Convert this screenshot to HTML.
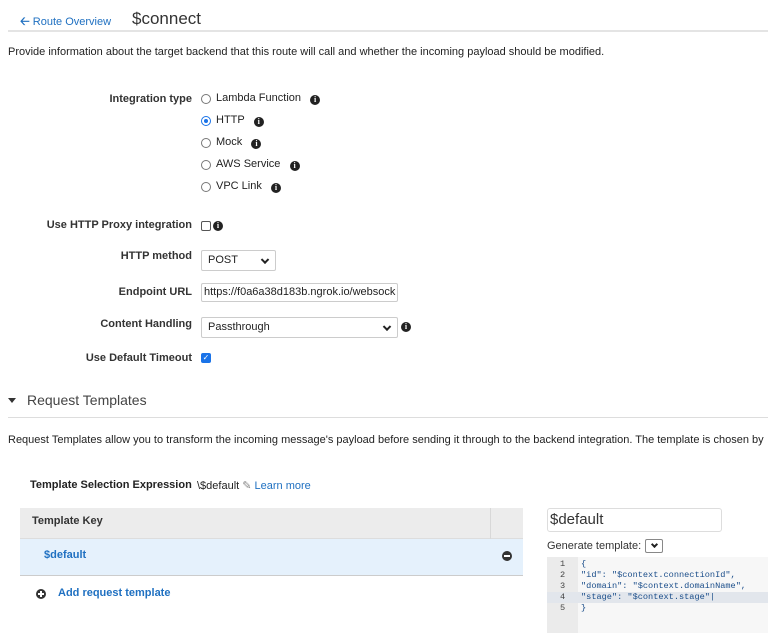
<!DOCTYPE html>
<html><head><style>
*{margin:0;padding:0;box-sizing:border-box}
body{width:768px;height:633px;overflow:hidden;background:#fff;font-family:"Liberation Sans",Arial,sans-serif;font-size:11px;color:#222;position:relative}
.a{position:absolute;white-space:nowrap}
.lbl{position:absolute;right:576px;font-weight:bold;color:#333;text-align:right;white-space:nowrap}
.blue{color:#1f70c1}
.info{display:inline-block;width:10px;height:10px;border-radius:50%;background:#222;color:#fff;font-size:8px;font-weight:bold;line-height:10px;text-align:center;font-family:"Liberation Serif",serif;vertical-align:-1px}
.radio{position:absolute;left:201px;width:10px;height:10px;border:1px solid #777;border-radius:50%;background:#fff}
.sel{position:absolute;border:1px solid #ccc;border-radius:2px;background:#fff;padding-left:6px;color:#222;overflow:hidden}
.chev{position:absolute;right:7px;top:50%;width:6px;height:6px;border-right:2px solid #222;border-bottom:2px solid #222;transform:translateY(-70%) rotate(45deg)}
.code{position:absolute;font-family:"Liberation Mono",monospace;font-size:8.6px;color:#1a4d8a;left:581px}
.ln{position:absolute;font-family:"Liberation Mono",monospace;font-size:8.6px;color:#444;left:560px}
</style></head><body>
<div class="a blue" style="left:20px;top:12px"><b style="font-size:12px">&#129120;</b> Route Overview</div>
<div class="a" style="left:132px;top:9px;font-size:17px;color:#333">$connect</div>
<div class="a" style="left:8px;top:30px;width:760px;height:2px;background:#e4e4e4"></div>
<div class="a" style="left:8px;top:46px">Provide information about the target backend that this route will call and whether the incoming payload should be modified.</div>

<div class="lbl" style="top:93px">Integration type</div>
<div class="radio" style="top:94px"></div><div class="a" style="left:216px;top:92px">Lambda Function &nbsp;&nbsp;<span class="info">i</span></div>
<div class="radio" style="top:116px;border-color:#1a73e8"><div style="position:absolute;left:2px;top:2px;width:4px;height:4px;border-radius:50%;background:#1a73e8"></div></div><div class="a" style="left:216px;top:114px">HTTP &nbsp;&nbsp;<span class="info">i</span></div>
<div class="radio" style="top:138px"></div><div class="a" style="left:216px;top:136px">Mock &nbsp;&nbsp;<span class="info">i</span></div>
<div class="radio" style="top:160px"></div><div class="a" style="left:216px;top:158px">AWS Service &nbsp;&nbsp;<span class="info">i</span></div>
<div class="radio" style="top:182px"></div><div class="a" style="left:216px;top:180px">VPC Link &nbsp;&nbsp;<span class="info">i</span></div>

<div class="lbl" style="top:219px">Use HTTP Proxy integration</div>
<div class="a" style="left:201px;top:221px;width:10px;height:10px;border:1px solid #555;border-radius:2px"></div>
<span class="info a" style="left:213px;top:221px">i</span>

<div class="lbl" style="top:250px">HTTP method</div>
<div class="sel" style="left:201px;top:250px;width:75px;height:21px;line-height:19px">POST<div class="chev"></div></div>

<div class="lbl" style="top:286px">Endpoint URL</div>
<div class="sel" style="left:201px;top:283px;width:197px;height:19px;line-height:17px;padding-left:2px">https://f0a6a38d183b.ngrok.io/websock</div>

<div class="lbl" style="top:318px">Content Handling</div>
<div class="sel" style="left:201px;top:317px;width:197px;height:21px;line-height:19px">Passthrough<div class="chev"></div></div>
<span class="info a" style="left:401px;top:322px">i</span>

<div class="lbl" style="top:352px">Use Default Timeout</div>
<div class="a" style="left:201px;top:353px;width:10px;height:10px;background:#1a73e8;border-radius:2px;color:#fff;font-size:8px;line-height:10px;text-align:center">&#10003;</div>

<div class="a" style="left:8px;top:398px;width:0;height:0;border-left:4px solid transparent;border-right:4px solid transparent;border-top:5px solid #333"></div>
<div class="a" style="left:27px;top:392px;font-size:14px;color:#444">Request Templates</div>
<div class="a" style="left:8px;top:417px;width:760px;height:1px;background:#ddd"></div>
<div class="a" style="left:8px;top:434px">Request Templates allow you to transform the incoming message's payload before sending it through to the backend integration. The template is chosen by</div>

<div class="a" style="left:30px;top:479px;font-weight:bold;color:#222">Template Selection Expression</div>
<div class="a" style="left:197px;top:479px">\$default <span style="color:#888">&#9998;</span><span class="blue"> Learn more</span></div>

<div class="a" style="left:20px;top:508px;width:503px;height:31px;background:#ececec;border-bottom:1px solid #ddd"></div>
<div class="a" style="left:490px;top:508px;width:1px;height:31px;background:#d8d8d8"></div>
<div class="a" style="left:32px;top:515px;font-weight:bold;color:#333">Template Key</div>
<div class="a" style="left:20px;top:539px;width:503px;height:37px;background:#e5f1fc;border-bottom:1px solid #ccc"></div>
<div class="a blue" style="left:44px;top:549px;font-weight:bold">$default</div>
<div class="a" style="left:502px;top:551px;width:10px;height:10px;border-radius:50%;background:#333"><div style="position:absolute;left:2px;top:4px;width:6px;height:2px;background:#fff"></div></div>
<div class="a" style="left:36px;top:589px;width:10px;height:10px;border-radius:50%;background:#333"><div style="position:absolute;left:2px;top:4px;width:6px;height:2px;background:#fff"></div><div style="position:absolute;left:4px;top:2px;width:2px;height:6px;background:#fff"></div></div>
<div class="a blue" style="left:58px;top:587px;font-weight:bold">Add request template</div>

<div class="a" style="left:547px;top:508px;width:175px;height:24px;border:1px solid #ddd;border-radius:3px;font-size:15px;line-height:22px;padding-left:2px;color:#333">$default</div>
<div class="a" style="left:547px;top:540px;color:#333">Generate template:</div>
<div class="a" style="left:645px;top:539px;width:18px;height:14px;border:1px solid #888;border-radius:2px"><div style="position:absolute;left:6px;top:2px;width:5px;height:5px;border-right:2px solid #222;border-bottom:2px solid #222;transform:rotate(45deg)"></div></div>

<div class="a" style="left:547px;top:557px;width:221px;height:76px;background:#f7f7f7"></div>
<div class="a" style="left:547px;top:557px;width:31px;height:76px;background:#ebebeb"></div>
<div class="a" style="left:547px;top:592px;width:221px;height:11px;background:#e2e6ec"></div>
<div class="ln" style="top:559px">1</div><div class="code" style="top:559px">{</div>
<div class="ln" style="top:570px">2</div><div class="code" style="top:570px">"id": "$context.connectionId",</div>
<div class="ln" style="top:581px">3</div><div class="code" style="top:581px">"domain": "$context.domainName",</div>
<div class="ln" style="top:592px">4</div><div class="code" style="top:592px">"stage": "$context.stage"|</div>
<div class="ln" style="top:603px">5</div><div class="code" style="top:603px">}</div>
</body></html>
